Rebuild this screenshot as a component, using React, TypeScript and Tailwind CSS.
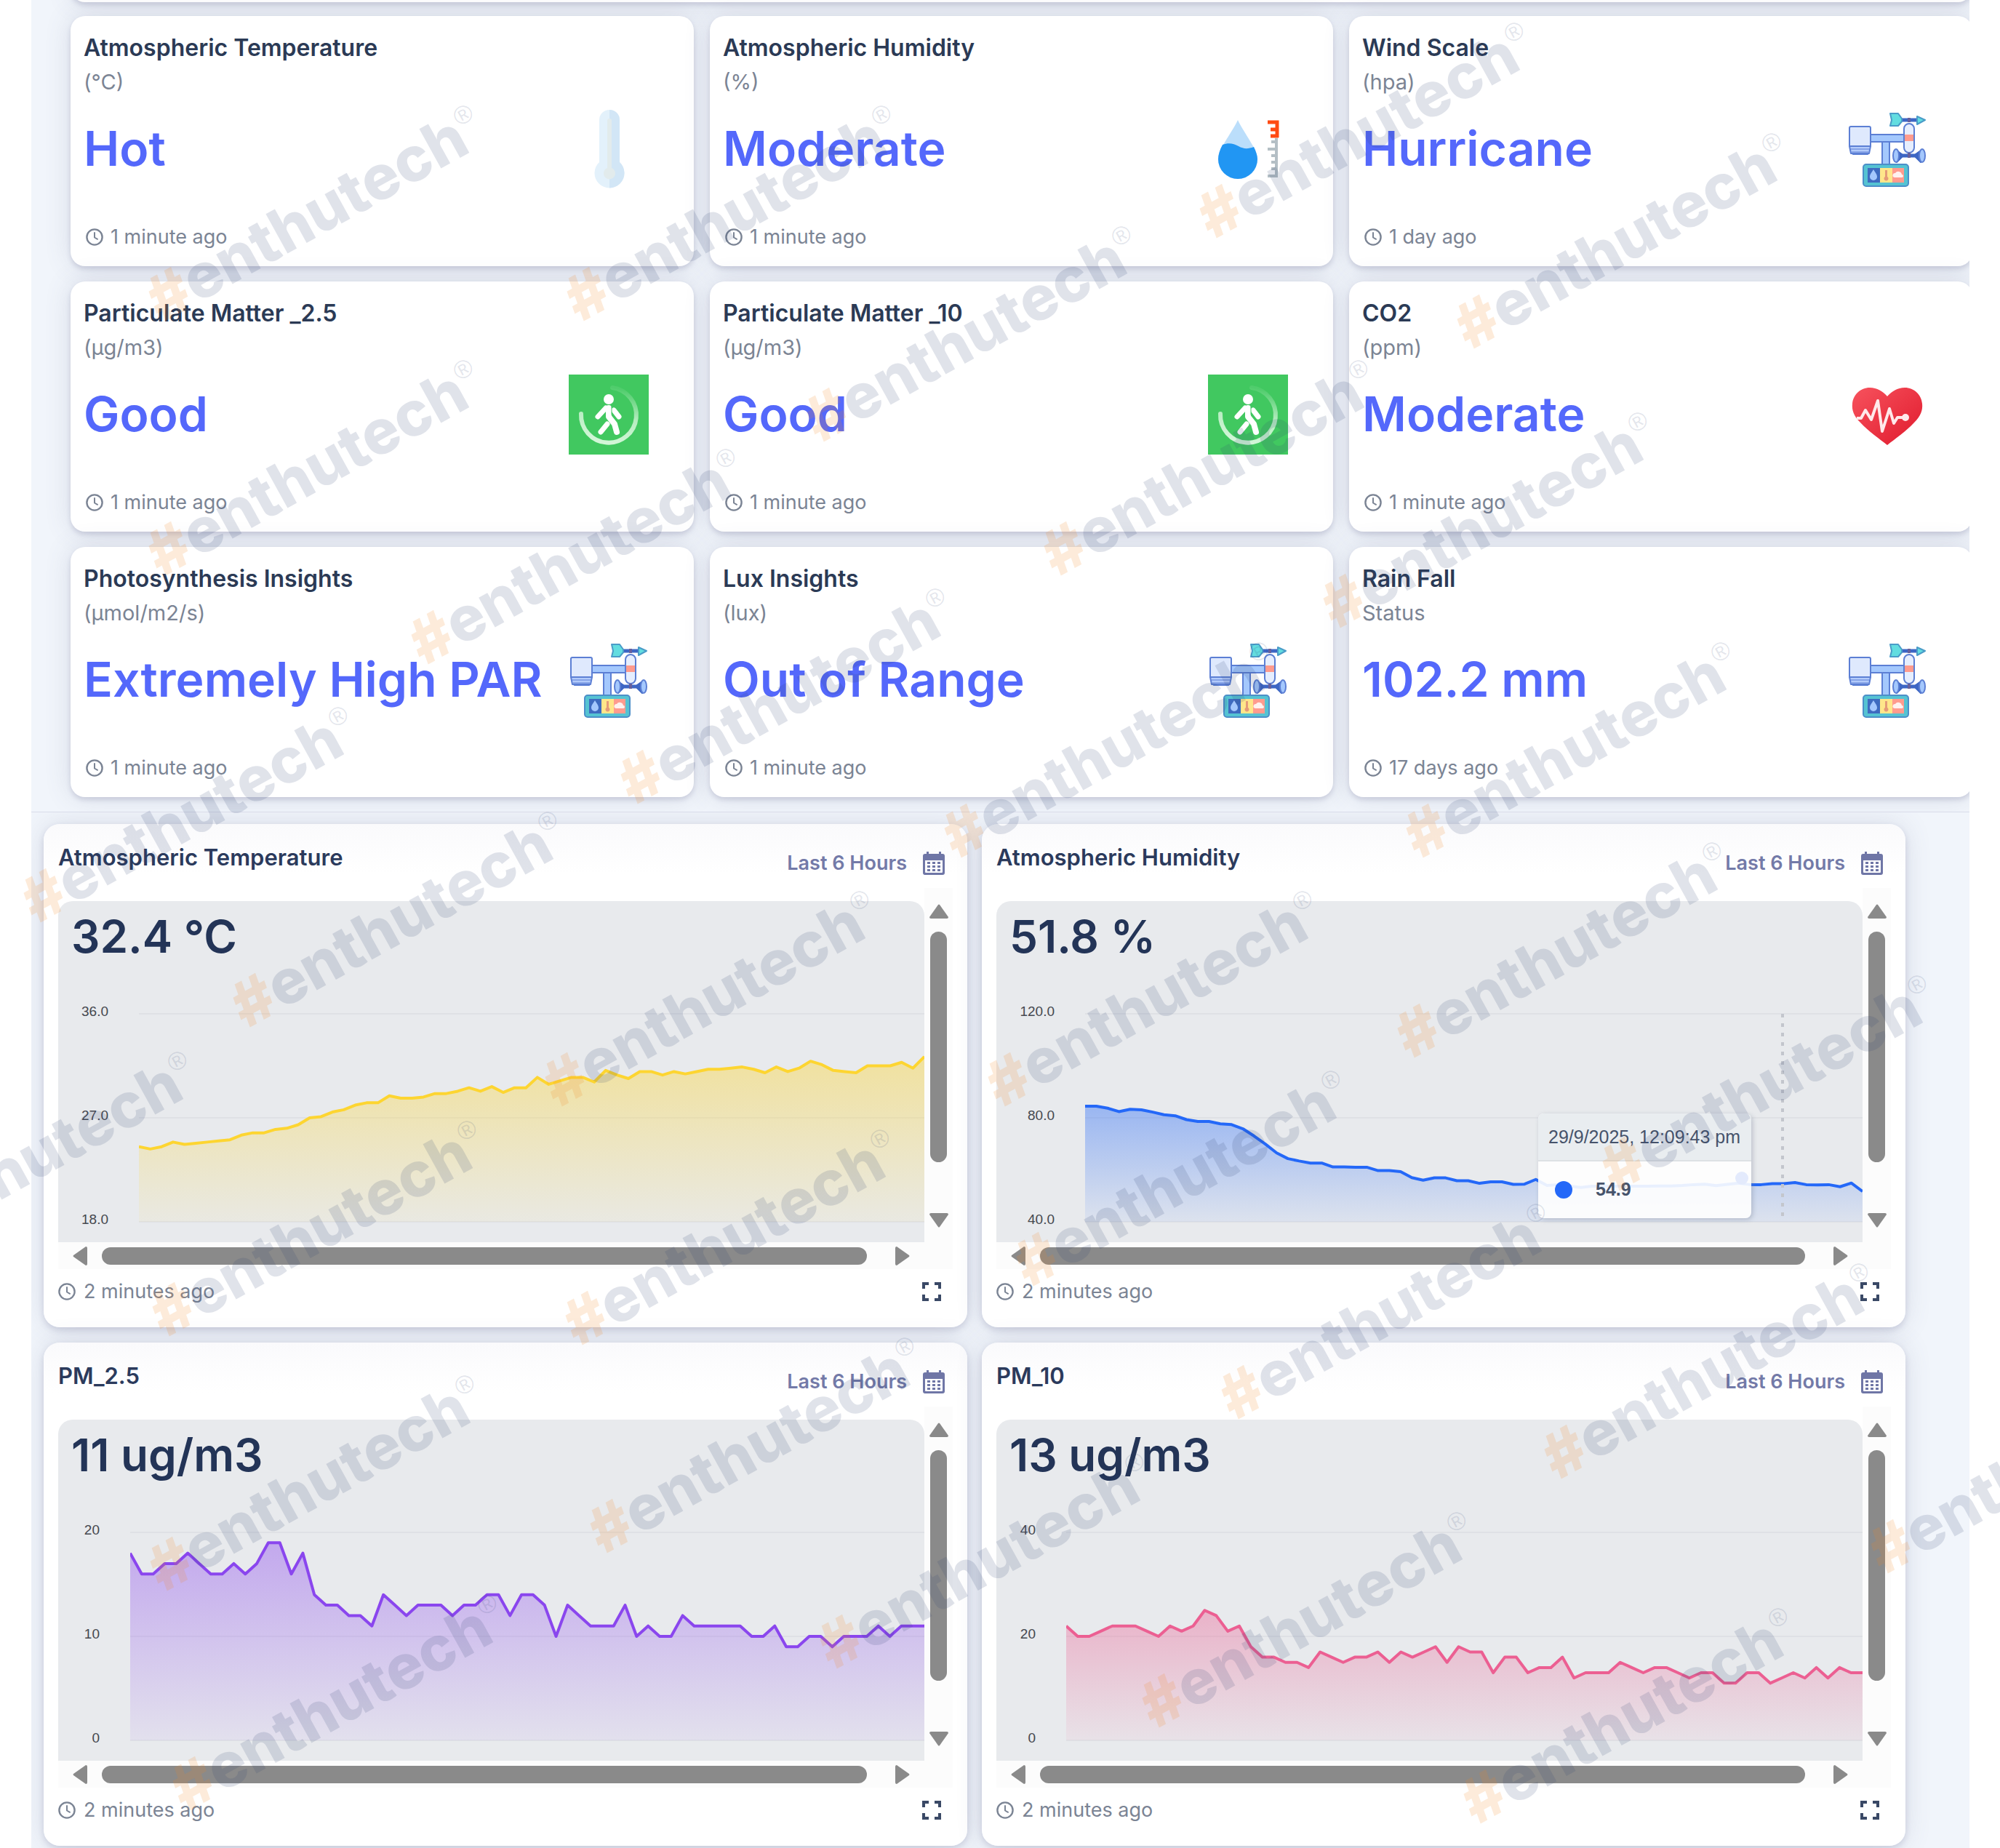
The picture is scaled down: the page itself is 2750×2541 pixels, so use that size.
import React from 'react';

type Kind = 'thermo' | 'humidity' | 'station' | 'walk' | 'heart';

const insights: { title: string; unit: string; value: string; ago: string; icon: Kind }[] = [
  { title: 'Atmospheric Temperature', unit: '(°C)', value: 'Hot', ago: '1 minute ago', icon: 'thermo' },
  { title: 'Atmospheric Humidity', unit: '(%)', value: 'Moderate', ago: '1 minute ago', icon: 'humidity' },
  { title: 'Wind Scale', unit: '(hpa)', value: 'Hurricane', ago: '1 day ago', icon: 'station' },
  { title: 'Particulate Matter _2.5', unit: '(μg/m3)', value: 'Good', ago: '1 minute ago', icon: 'walk' },
  { title: 'Particulate Matter _10', unit: '(μg/m3)', value: 'Good', ago: '1 minute ago', icon: 'walk' },
  { title: 'CO2', unit: '(ppm)', value: 'Moderate', ago: '1 minute ago', icon: 'heart' },
  { title: 'Photosynthesis Insights', unit: '(μmol/m2/s)', value: 'Extremely High PAR', ago: '1 minute ago', icon: 'station' },
  { title: 'Lux Insights', unit: '(lux)', value: 'Out of Range', ago: '1 minute ago', icon: 'station' },
  { title: 'Rain Fall', unit: 'Status', value: '102.2 mm', ago: '17 days ago', icon: 'station' },
];

type Chart = {
  id: string;
  title: string;
  value: string;
  ticks: string[];
  min: number;
  max: number;
  color: string;
  opacity: number;
  axis: string;
  data: number[];
  tooltip?: boolean;
};

const charts: Chart[] = [
  {
    id: 'temp',
    title: 'Atmospheric Temperature',
    value: '32.4 °C',
    ticks: ['36.0', '27.0', '18.0'],
    min: 18,
    max: 36,
    color: '#fdd531',
    opacity: 0.42,
    axis: 'w-[69px]',
    data: [
      24.5, 24.3, 24.5, 24.9, 24.7, 24.8, 24.9, 25, 25.1, 25.5, 25.7, 25.7, 26, 26.1, 26.4, 27, 27.1, 27.5, 27.7, 28.1,
      28.3, 28.3, 28.9, 28.7, 28.7, 28.8, 29.1, 29.1, 29.3, 29.6, 29.3, 29.7, 29.2, 29.6, 29.6, 30.5, 29.9, 30.2, 30.5,
      30.5, 30.1, 31.1, 30.7, 30.4, 31, 31, 30.7, 31, 30.8, 31, 31.2, 31.2, 31.3, 31.4, 31.2, 30.9, 31.4, 31, 31.3,
      31.9, 31.6, 31.1, 31, 30.9, 31.5, 31.5, 31.5, 31.8, 31.3, 32.3,
    ],
  },
  {
    id: 'hum',
    title: 'Atmospheric Humidity',
    value: '51.8 %',
    ticks: ['120.0', '80.0', '40.0'],
    min: 40,
    max: 120,
    color: '#2468f8',
    opacity: 0.4,
    axis: 'w-[80px]',
    tooltip: true,
    data: [
      84.5, 84.5, 83.7, 82.4, 83.3, 83.1, 82.2, 81.2, 80.8, 79.3, 78.6, 78.6, 77.7, 77.4, 75.8, 73, 69.9, 66.5, 64.3,
      63.4, 62.6, 62.6, 61.1, 61.1, 61, 61, 59.7, 59.7, 59.3, 57, 56, 56.9, 56.9, 55.8, 55.8, 54.8, 55.4, 55.4, 54.4,
      54.5, 56.3, 54, 54.3, 53.7, 53.2, 53.7, 53.7, 53.7, 53.7, 53.7, 53.7, 53.8, 53.8, 54, 54.3, 54.5, 53.9, 54.4,
      54.9, 54.3, 54.3, 54.7, 54.7, 55.1, 54.3, 54.2, 54.3, 53.5, 54.9, 51.7,
    ],
  },
  {
    id: 'pm25',
    title: 'PM_2.5',
    value: '11 ug/m3',
    ticks: ['20', '10', '0'],
    min: 0,
    max: 20,
    color: '#8a46ee',
    opacity: 0.4,
    axis: 'w-[57px]',
    data: [
      18, 16, 16, 17, 17, 18, 17, 16, 16, 17, 16, 17, 19, 19, 16, 18, 14, 13, 13, 12, 12, 11, 14, 13, 12, 13, 13, 13, 12,
      13, 13, 14, 14, 12, 14, 14, 13, 10, 13, 12, 11, 11, 11, 13, 10, 11, 10, 10, 12, 11, 11, 11, 11, 11, 10, 10, 11, 9,
      9, 10, 10, 9, 10, 10, 10, 11, 10, 11, 11, 11,
    ],
  },
  {
    id: 'pm10',
    title: 'PM_10',
    value: '13 ug/m3',
    ticks: ['40', '20', '0'],
    min: 0,
    max: 40,
    color: '#ec5f92',
    opacity: 0.4,
    axis: 'w-[54px]',
    data: [
      22, 20, 20, 21, 22, 22, 22, 21, 20, 22, 21, 22, 25, 24, 21, 22, 18, 16, 16, 15, 15, 14, 17, 16, 15, 16, 16, 17, 15,
      17, 16, 17, 18, 15, 18, 17, 17, 13, 16, 16, 13, 14, 14, 16, 12, 13, 13, 13, 15, 14, 13, 14, 14, 13, 12, 13, 13, 11,
      11, 13, 13, 11, 12, 13, 12, 14, 12, 14, 13, 13,
    ],
  },
];

// centre of each hash sign
const marks: [number, number][] = [
  [235, 402], [810, 402], [1680, 288], [2034, 440], [1140, 568], [235, 752], [1466, 752], [1850, 824],
  [596, 874], [884, 1066], [1964, 1140], [63, 1229], [1329, 1140], [351, 1373], [780, 1482], [1389, 1482],
  [1952, 1415], [2234, 1598], [-158, 1703], [240, 1798], [808, 1810], [1428, 1729], [1710, 1912],
  [2154, 1994], [237, 2148], [842, 2096], [1601, 2336], [2603, 2124], [1158, 2255], [268, 2450], [2043, 2468],
];

function ClockIcon() {
  return (
    <svg viewBox="0 0 24 24" className="h-[24px] w-[24px]" fill="none" stroke="currentColor" strokeWidth="2.4" aria-hidden="true">
      <circle cx="12" cy="12" r="10.6" />
      <path d="M12 6v6.5l4 2.3" strokeLinecap="round" strokeLinejoin="round" strokeWidth="2" />
    </svg>
  );
}

function CalendarIcon() {
  return (
    <svg viewBox="0 0 30 32" className="h-[32px] w-[30px]" aria-hidden="true">
      <path
        fill="#6f76a6"
        fillRule="evenodd"
        d="M5 0h3v3h14V0h3v3h2a3 3 0 0 1 3 3v23a3 3 0 0 1-3 3H3a3 3 0 0 1-3-3V6a3 3 0 0 1 3-3h2zM3 12v16q0 1 1 1h22q1 0 1-1V12z"
      />
      <g fill="#6f76a6">
        <path d="M6 14h4v3H6zM13 14h4v3h-4zM20 14h4v3h-4zM6 19h4v3H6zM13 19h4v3h-4zM20 19h4v3h-4zM6 24h4v3H6zM13 24h4v3h-4zM20 24h4v3h-4z" />
      </g>
    </svg>
  );
}

function ThermoIcon() {
  return (
    <svg viewBox="0 0 110 110" className="h-full w-full" aria-hidden="true">
      <defs>
        <clipPath id="thermo-right">
          <rect x="56" width="54" height="110" />
        </clipPath>
      </defs>
      <path d="M42 15a14 14 0 0 1 28 0v58a20.500 20.500 0 1 1-28 0z" fill="#e3f1fb" />
      <path d="M42 15a14 14 0 0 1 28 0v58a20.500 20.500 0 1 1-28 0z" fill="#d2e6f6" clipPath="url(#thermo-right)" />
      <path d="M53 16a3 3 0 0 1 6 0v65a8 8 0 1 1-6 0z" fill="#e2ebec" />
    </svg>
  );
}

function HumidityIcon() {
  return (
    <svg viewBox="0 0 110 110" className="h-full w-full" aria-hidden="true">
      <path d="M41 15c4 9 15 25 21 36 4 7 6 13 6 18a27 27 0 0 1-54 0c0-5 2-11 6-18 6-11 17-27 21-36z" fill="#bbdefb" />
      <path d="M20 49c8-3 15-2 22 2s13 4 21 1c3 6 5 12 5 17a27 27 0 0 1-54 0c0-6 2-13 6-20z" fill="#2196f3" />
      <path d="M94 40v54M93 45h-6M93 55H82M93 64h-6M93 73h-6M93 82h-6M93 92H82" fill="none" stroke="#b4bfc5" strokeWidth="4" />
      <path d="M82 18h13v21M95 28h-9M97 37H86" fill="none" stroke="#ff4a12" strokeWidth="5" />
    </svg>
  );
}

function StationIcon() {
  return (
    <svg viewBox="0 0 110 110" className="h-full w-full" stroke="#5c7fd4" strokeWidth="2" strokeLinejoin="round" aria-hidden="true">
      <path d="M32 35h47v10H32z" fill="#a4c8fd" />
      <path d="M48 45h10v33H48z" fill="#a4c8fd" />
      <path d="M3 26q0-2 2-2h25q2 0 2 2v25H3z" fill="#dfe9fd" />
      <path d="M3 51h29l-2 10H5zM7 61h22l-1 1H8z" fill="#b3cbfb" />
      <path d="M5 55h25M6 59h23" strokeWidth="1" />
      <path d="M75 15h24" stroke="#3d66c4" strokeWidth="5" />
      <path d="M59 6h11l5 7v4l-5 6H59l2-8z" fill="#62dde0" stroke="#4a9cc8" />
      <path d="M96 10l11 5-11 6z" fill="#62dde0" stroke="#4a9cc8" />
      <rect x="78" y="20" width="14" height="40" rx="7" fill="#e6eefe" />
      <path d="M79 35h12v9H79z" fill="#ff9b8e" stroke="none" />
      <path d="M69 64h34" stroke="#3d66c4" strokeWidth="5" />
      <path d="M68 57l7 5v4l-7 7zM101 57l-7 5v4l7 7z" fill="#3d66c4" stroke="#3d66c4" />
      <ellipse cx="67" cy="64" rx="4" ry="9" fill="#a4c8fd" />
      <ellipse cx="103" cy="64" rx="4" ry="9" fill="#a4c8fd" />
      <path d="M85 12v6M85 60v7" stroke="#665f9c" strokeWidth="4" />
      <rect x="22" y="76" width="62" height="30" rx="4" fill="#55c3d2" stroke="#4c8fc9" />
      <g stroke="none">
        <path d="M28 81h17v20H28z" fill="#3e6bc0" />
        <path d="M45 81h17v20H45z" fill="#ffe68a" />
        <path d="M62 81h16v20H62z" fill="#ff9b8e" />
        <path d="M36 83c3 5 5 7 5 10a5 5 0 0 1-10 0c0-3 2-5 5-10z" fill="#a4c8fd" />
        <path d="M52 84h3v9a3 3 0 1 1-3 0z" fill="#e49a78" />
        <path d="M65 94a3 3 0 0 1 1-6 5 5 0 0 1 9 2 2 2 0 0 1 0 4z" fill="#fff1ef" />
      </g>
    </svg>
  );
}

function WalkIcon() {
  return (
    <svg viewBox="0 0 110 110" className="h-full w-full" fill="none" strokeLinecap="round" strokeLinejoin="round" aria-hidden="true">
      <defs>
        <linearGradient id="walk-ring" x1="0.4" y1="1" x2="0.6" y2="0">
          <stop offset="0" stopColor="#d3f6d8" />
          <stop offset="0.5" stopColor="#d3f6d8" stopOpacity="0.8" />
          <stop offset="1" stopColor="#d3f6d8" stopOpacity="0.1" />
        </linearGradient>
      </defs>
      <path d="M0 0h110v110H0z" fill="#41c860" />
      <path d="M17 54A38 38 0 1 0 60 18" stroke="url(#walk-ring)" strokeWidth="6" />
      <circle cx="55" cy="34" r="7" fill="#fff" />
      <g stroke="#fff" strokeWidth="7">
        <path d="M51 46L40 58M62 49l7 9" />
        <path d="M55 46v12l8 10 3 11" strokeWidth="8" />
        <path d="M53 68l-9 11" />
      </g>
      <path d="M59 44v11" stroke="#41c860" strokeWidth="1" />
    </svg>
  );
}

function HeartIcon() {
  return (
    <svg viewBox="0 0 110 110" className="h-full w-full" aria-hidden="true">
      <defs>
        <linearGradient id="heart-fill" x1="0" y1="0" x2="1" y2="1">
          <stop offset="0" stopColor="#f7525d" />
          <stop offset="1" stopColor="#e01a2d" />
        </linearGradient>
      </defs>
      <path
        d="M55 97C45 89 29 78 18 66 9 57 6 49 7 40c1-12 11-22 24-22 10 0 18 5 24 12 6-7 14-12 24-12 13 0 23 10 24 22 1 9-2 17-11 26-11 12-27 23-37 31z"
        fill="url(#heart-fill)"
      />
      <path d="M13 60h6l6-11 8 13 9-26 6 42 10-31 6 20 5-8h10" fill="none" stroke="#ffe9eb" strokeWidth="4" strokeLinejoin="round" />
      <circle cx="80" cy="59" r="5" fill="#ffe9eb" />
    </svg>
  );
}

const icons: Record<Kind, () => React.JSX.Element> = {
  thermo: ThermoIcon,
  humidity: HumidityIcon,
  station: StationIcon,
  walk: WalkIcon,
  heart: HeartIcon,
};

function InsightCard({ title, unit, value, ago, icon }: (typeof insights)[number]) {
  const Icon = icons[icon];
  return (
    <article className="rounded-[20px] bg-white pt-[22px] pr-[62px] pb-[20px] pl-[18px] shadow-[0_4px_6px_rgba(60,60,110,0.16),0_0_36px_rgba(80,85,125,0.16)]">
      <h2 className="text-[32px] leading-[44px] font-semibold whitespace-nowrap text-[#2b3a55]">{title}</h2>
      <p className="text-[29px] leading-[50px] text-[#7b8494]">{unit}</p>
      <div className="mt-[12px] flex h-[110px] items-center justify-between">
        <p className="pb-[3px] text-[66px] leading-[80px] font-semibold whitespace-nowrap text-[#5468fb]">{value}</p>
        <div className="h-[110px] w-[110px] shrink-0">
          <Icon />
        </div>
      </div>
      <p className="mt-[46px] flex items-center gap-[10px] pl-[3px] text-[27px] leading-[40px] text-[#7b8494]">
        <ClockIcon />
        {ago}
      </p>
    </article>
  );
}

function Plot({ chart }: { chart: Chart }) {
  const { id, data, min, max, color, opacity } = chart;
  const points = data.map((v, i) => `${i * 10},${(286 * (max - v)) / (max - min)}`).join(' ');
  return (
    <svg viewBox="0 0 690 286" preserveAspectRatio="none" className="h-full w-full overflow-visible" role="img" aria-label={chart.title}>
      <defs>
        <linearGradient id={`fill-${id}`} x1="0" y1="0" x2="0" y2="1">
          <stop offset="0" stopColor={color} stopOpacity={opacity} />
          <stop offset="1" stopColor={color} stopOpacity="0.06" />
        </linearGradient>
      </defs>
      <path d="M0 0H690M0 143H690M0 286H690" stroke="#dfe1e5" strokeWidth="2" vectorEffect="non-scaling-stroke" />
      <polygon points={`0,286 ${points} 690,286`} fill={`url(#fill-${id})`} />
      <polyline points={points} fill="none" stroke={color} strokeWidth="4" strokeLinejoin="round" vectorEffect="non-scaling-stroke" />
      {chart.tooltip && (
        <path d="M619 0V286" stroke="#c3c6cd" strokeWidth="4" strokeDasharray="5 8" vectorEffect="non-scaling-stroke" />
      )}
    </svg>
  );
}

function Tooltip() {
  return (
    <div className="absolute top-[292px] right-[153px] w-[293px] overflow-hidden rounded-[8px] bg-white/90 font-['Liberation_Sans',sans-serif] text-[25px] text-[#46536b] shadow-[2px_2px_6px_rgba(120,130,150,0.4)]">
      <p className="border-b-2 border-[#dde1e4] bg-[#e9edf0] pl-[14px] leading-[64px] whitespace-nowrap">29/9/2025, 12:09:43 pm</p>
      <p className="flex h-[78px] items-center gap-[32px] pl-[23px] font-bold">
        <span className="h-[24px] w-[24px] rounded-full bg-[#2468f8]" />
        54.9
      </p>
      <span className="absolute top-[80px] right-[4px] h-[18px] w-[18px] rounded-full bg-[#e3eafc]" />
    </div>
  );
}

function ChartCard({ chart }: { chart: Chart }) {
  return (
    <article className="rounded-[22px] bg-linear-to-b from-[#fafafc] to-white to-10% pr-[20px] pb-[29px] pl-[20px] shadow-[0_4px_8px_rgba(60,60,110,0.16),0_0_36px_rgba(80,85,125,0.16)]">
      <header className="flex h-[88px] items-start justify-between pr-[11px]">
        <h2 className="pt-[26px] text-[31px] leading-[40px] font-semibold text-[#2b3a5c]">{chart.title}</h2>
        <button type="button" className="mt-[34px] flex items-center gap-[22px] text-[27px] leading-[40px] font-semibold text-[#737aa8]">
          Last 6 Hours
          <CalendarIcon />
        </button>
      </header>

      <div className="flex h-[524px] bg-[#fcfcfc]">
        <div className="flex min-w-0 flex-1 flex-col">
          <div className="bg-white pt-[18px]">
            <div className="relative h-[469px] rounded-t-[20px] bg-[#e8eaed]">
              <p className="pt-[17px] pl-[18px] text-[62px] leading-[64px] font-semibold text-[#233457]">{chart.value}</p>
              <div className="flex pt-[61px]">
                <ul className={`flex h-[306px] flex-col justify-between text-right font-['Liberation_Sans',sans-serif] text-[19px] leading-[20px] text-[#45484f] ${chart.axis}`}>
                  {chart.ticks.map((t) => (
                    <li key={t}>{t}</li>
                  ))}
                </ul>
                <div className="mt-[13px] ml-[42px] h-[286px] min-w-0 flex-1 overflow-x-clip">
                  <Plot chart={chart} />
                </div>
              </div>
              {chart.tooltip && <Tooltip />}
            </div>
          </div>
          <div className="flex h-[37px] items-center px-[20px]" aria-hidden="true">
            <svg viewBox="0 0 20 26" className="h-[26px] w-[20px]" fill="#8a8a8a">
              <path d="M18 0q2 0 2 2v22q0 2-2 2L1 14q-1-1 0-2z" />
            </svg>
            <div className="mr-[39px] ml-[20px] h-[24px] flex-1 rounded-full bg-[#8a8a8a]" />
            <svg viewBox="0 0 20 26" className="h-[26px] w-[20px]" fill="#8a8a8a">
              <path d="M2 0Q0 0 0 2v22q0 2 2 2l17-12q1-1 0-2z" />
            </svg>
          </div>
        </div>
        <div className="flex w-[39px] flex-col items-center pt-[22px] pb-[57px]" aria-hidden="true">
          <svg viewBox="0 0 26 20" className="h-[20px] w-[26px]" fill="#8a8a8a">
            <path d="M0 18q0 2 2 2h22q2 0 2-2L14 1q-1-1-2 0z" />
          </svg>
          <div className="mt-[18px] mb-[70px] w-[23px] flex-1 rounded-full bg-[#8a8a8a]" />
          <svg viewBox="0 0 26 20" className="h-[20px] w-[26px]" fill="#8a8a8a">
            <path d="M0 2q0-2 2-2h22q2 0 2 2L14 19q-1 1-2 0z" />
          </svg>
        </div>
      </div>

      <footer className="mt-[11px] flex items-center justify-between pr-[16px] text-[27px] leading-[40px] text-[#7b8494]">
        <p className="flex items-center gap-[11px]">
          <ClockIcon />
          2 minutes ago
        </p>
        <button type="button" aria-label="Full screen">
          <svg viewBox="0 0 26 26" className="h-[26px] w-[26px]" fill="none" stroke="#3a4966" strokeWidth="4">
            <path d="M2 9V2h7M17 2h7v7M24 17v7h-7M9 24H2v-7" />
          </svg>
        </button>
      </footer>
    </article>
  );
}

function Watermark() {
  return (
    <div className="pointer-events-none absolute inset-0 overflow-hidden" aria-hidden="true">
      {marks.map(([x, y]) => (
        <div
          key={`${x}-${y}`}
          className="absolute flex h-[100px] origin-[32px_50px] -rotate-29 items-center text-[85px] leading-none font-extrabold whitespace-nowrap text-[#304473]/15"
          style={{ left: x - 32, top: y - 50 }}
        >
          <span className="text-[#f28a24]/17">#</span>
          <span>enthutech</span>
          <span className="-mt-[40px] font-['Liberation_Sans',sans-serif] text-[35px] font-normal">®</span>
        </div>
      ))}
    </div>
  );
}

export default function App() {
  return (
    <main className="relative overflow-hidden bg-white pr-[42px] pl-[43px] font-['Inter',sans-serif]">
      <section className="overflow-hidden bg-[#f1f5fb] pb-[20px] pl-[54px]">
        <div className="-mt-[37px] -mr-[4px] mb-[19px] h-[40px] rounded-[20px] bg-white shadow-[0_4px_6px_rgba(60,60,110,0.16),0_0_36px_rgba(80,85,125,0.16)]" />
        <div className="-mr-[4px] grid grid-cols-3 gap-x-[22px] gap-y-[21px]">
          {insights.map((c) => (
            <InsightCard key={c.title} {...c} />
          ))}
        </div>
      </section>

      <section className="overflow-hidden border-t border-[#d9dcea] bg-[#f1f5fb] pt-[16px] pr-[88px] pb-[3px] pl-[17px]">
        <div className="grid grid-cols-2 gap-x-[20px] gap-y-[21px]">
          {charts.map((c) => (
            <ChartCard key={c.id} chart={c} />
          ))}
        </div>
      </section>

      <Watermark />
    </main>
  );
}
